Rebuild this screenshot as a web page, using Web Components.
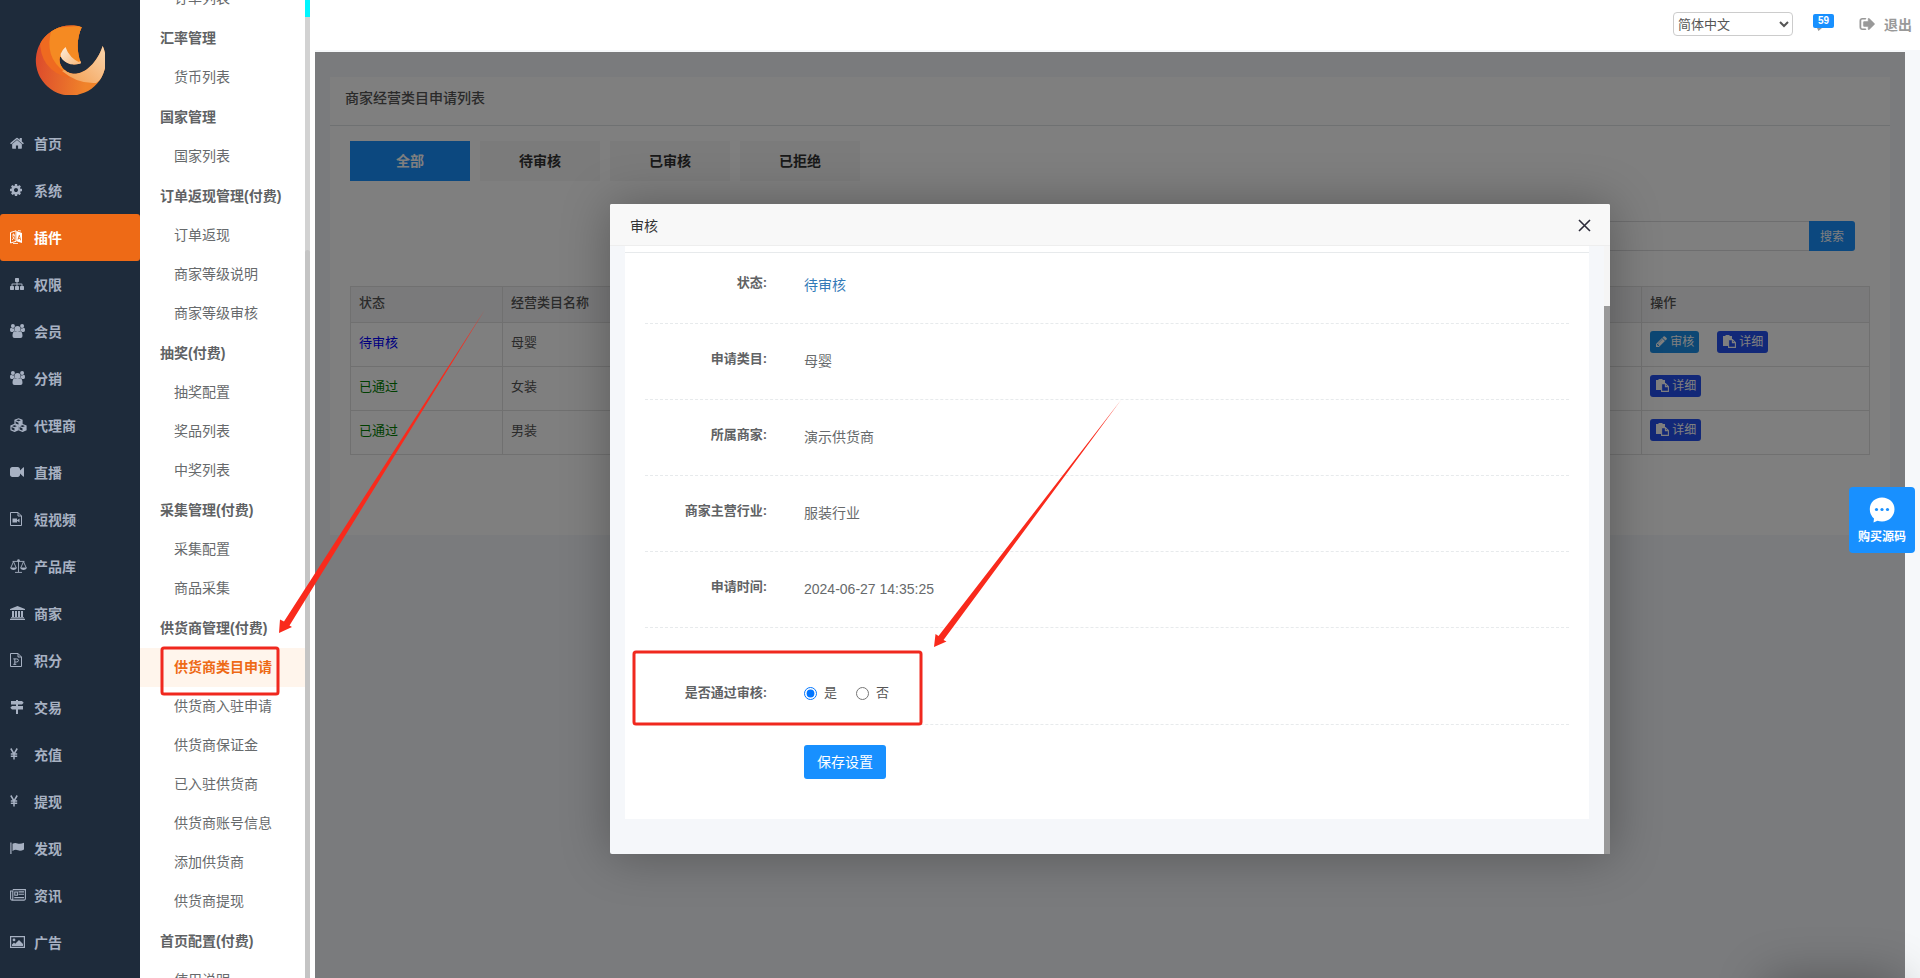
<!DOCTYPE html>
<html lang="zh-CN">
<head>
<meta charset="utf-8">
<title>商家经营类目申请列表</title>
<style>
  html, body { margin: 0; height: 100%; }
  body { overflow: hidden; font-family: "Liberation Sans", "Noto Sans CJK SC", sans-serif; font-size: 14px; color: #555; background: #fff; }
</style>
</head>
<body>
<admin-shell>
  <main-nav slot="nav"></main-nav>
  <sub-nav slot="sub"></sub-nav>
  <top-bar slot="top"></top-bar>
  <category-page></category-page>
  <audit-dialog slot="dialog" heading="审核"></audit-dialog>
  <source-button slot="float"></source-button>
  <mark-layer slot="marks"></mark-layer>
</admin-shell>

<script>
const ICONS = {
  home: ['64 160 1664 1408', 14, 12, '<path d="M1472 992v480q0 26-19 45t-45 19h-384v-384h-256v384h-384q-26 0-45-19t-19-45v-480q0-1 .5-3t.5-3l575-474 575 474q1 2 1 6zm223-69l-62 74q-8 9-21 11h-3q-13 0-21-7l-692-577-692 577q-12 8-24 7-13-2-21-11l-62-74q-8-10-7-23.5t11-21.5l719-599q32-26 76-26t76 26l244 204v-195q0-14 9-23t23-9h192q14 0 23 9t9 23v408l219 182q10 8 11 21.5t-7 23.5z"/>'],
  cog: ['128 128 1536 1536', 12, 12, '<path d="M1152 896q0-106-75-181t-181-75-181 75-75 181 75 181 181 75 181-75 75-181zm512-109v222q0 12-8 23t-20 13l-185 28q-19 54-39 91 35 50 107 138 10 12 10 25t-9 23q-27 37-99 108t-94 71q-12 0-26-9l-138-108q-44 23-91 38-16 136-29 186-7 28-36 28h-222q-14 0-24.5-8.5t-11.5-21.5l-28-184q-49-16-90-37l-141 107q-10 9-25 9-14 0-25-11-126-114-165-168-7-10-7-23 0-12 8-23 15-21 51-66.5t54-70.5q-27-50-41-99l-183-27q-13-2-21-12.5t-8-23.5v-222q0-12 8-23t19-13l186-28q14-46 39-92-40-57-107-138-10-12-10-24 0-10 9-23 26-36 98.5-107.5t94.5-71.5q13 0 26 10l138 107q44-23 91-38 16-136 29-186 7-28 36-28h222q14 0 24.5 8.5t11.5 21.5l28 184q49 16 90 37l142-107q9-9 24-9 13 0 25 10 129 119 165 170 7 8 7 22 0 12-8 23-15 21-51 66.5t-54 70.5q26 50 41 98l183 28q13 2 21 12.5t8 23.5z"/>'],
  language: ['0 0 12 14', 12, 14, '<path d="M.5 2.500 6 .8v10.500L.5 13z" fill="none" stroke="currentColor"/><path d="M2 5h3M3.500 3.500v2M2 10c1.500-1 2.300-3 2.300-5M2.500 6.500 4.800 9.500" fill="none" stroke="currentColor" stroke-width=".8"/><path fill-rule="evenodd" d="M6.500 1 12 3v10l-5.500-1.700zM9 4.800 7.500 9.500l.8.200.3-1 1.400.4.300 1.100.8.200L9.700 5zM9.300 6.200l.5 2-1-.3z"/><path d="M3 13.500h5M8 .5l3 .500" fill="none" stroke="currentColor" stroke-width=".8"/>'],
  sitemap: ['0 128 1792 1536', 14, 12, '<path d="M1792 1248v320q0 40-28 68t-68 28h-320q-40 0-68-28t-28-68v-320q0-40 28-68t68-28h96v-192h-512v192h96q40 0 68 28t28 68v320q0 40-28 68t-68 28h-320q-40 0-68-28t-28-68v-320q0-40 28-68t68-28h96v-192h-512v192h96q40 0 68 28t28 68v320q0 40-28 68t-68 28h-320q-40 0-68-28t-28-68v-320q0-40 28-68t68-28h96v-192q0-52 38-90t90-38h512v-192h-96q-40 0-68-28t-28-68v-320q0-40 28-68t68-28h320q40 0 68 28t28 68v320q0 40-28 68t-68 28h-96v192h512q52 0 90 38t38 90v192h96q40 0 68 28t28 68z"/>'],
  group: ['0 0 15 14', 15, 14, '<circle cx="7.500" cy="5" r="3"/><circle cx="2.900" cy="2" r="2"/><circle cx="12.100" cy="2" r="2"/><path d="M0 6.200C0 4.600.5 3.800 1.200 3.800q1.600 1 3 .4Q3.700 6 5 7.100 3.500 7 2.800 8H1.400Q0 8 0 6.200zM15 6.200c0-1.600-.5-2.400-1.200-2.400q-1.600 1-3 .4Q11.300 6 10 7.100q1.500-.1 2.200.9h1.400Q15 8 15 6.200zM2.500 12c0-3 .8-4.800 2.500-4.800q2.500 1.700 5 0c1.700 0 2.500 1.800 2.500 4.800q0 2-2 2h-6q-2 0-2-2z"/>'],
  cubes: ['0 0 17 14', 17, 14, '<g fill="none" stroke="currentColor" stroke-width="1.200"><path d="M8.500.8 12 2.200v3.600L8.500 7.400 5 5.800V2.200z"/><path d="M5 2.400 8.500 4 12 2.400M4.500 6.500 8 8v3.800l-3.500 1.600L1 11.800V8z"/><path d="m1 8.200 3.500 1.500L8 8.200M12.500 6.500 16 8v3.800l-3.500 1.600L9 11.800V8z"/><path d="m9 8.200 3.500 1.500L16 8.200"/></g><path d="M8.500 4 12 2.400v3.400L8.500 7.400zM4.500 9.700 8 8.200v3.600l-3.500 1.600zM12.500 9.700 16 8.200v3.600l-3.500 1.600z"/>'],
  video: ['0 288 1792 1216', 14, 10, '<path d="M1792 352v1088q0 42-39 59-13 5-25 5-27 0-45-19l-403-403v166q0 119-84.5 203.5t-203.5 84.5h-704q-119 0-203.500-84.5t-84.5-203.5v-704q0-119 84.5-203.5t203.5-84.5h704q119 0 203.500 84.500t84.500 203.500v165l403-402q18-19 45-19 12 0 25 5 39 17 39 59z"/>'],
  filevideo: ['0 0 12 14', 12, 14, '<path d="M.5.5H8L11.500 4v9.500H.5zM8 .5V4h3.500" fill="none" stroke="currentColor"/><path d="M2.500 6.500H7v4H2.500zM7 8.300l2.500-1.800v4L7 8.800z"/>'],
  scale: ['0 0 17 14', 17, 14, '<g fill="none" stroke="currentColor" stroke-width=".9"><path d="M8.500 1v12M5 13.400h7M2.500 2.400h12M3.500 2.600.7 9M3.500 2.600 6.300 9M13.500 2.600 10.700 9M13.500 2.600 16.300 9M.5 9h6M10.500 9h6"/></g><circle cx="8.500" cy="1.500" r="1.300"/><path d="M.4 9h6.200q-.6 2-3.100 2T.4 9zM10.400 9h6.200q-.6 2-3.100 2t-3.100-2z"/>'],
  bank: ['0 0 15 14', 15, 14, '<path d="M7.500 0 15 3v1H0V3zM2 5h2v6H2zM5 5h2v6H5zM8 5h2v6H8zM11 5h2v6h-2zM1 11.300h13v1H1zM0 12.800h15V14H0z"/>'],
  fileppt: ['0 0 12 14', 12, 14, '<path d="M.5.5H8L11.500 4v9.500H.5zM8 .5V4h3.500M3.300 5.900h3.200q2 0 2 1.500t-2 1.600H4.800M4.800 5.900v5.600M3.300 11.300h3" fill="none" stroke="currentColor"/>'],
  signs: ['0 0 14 14', 14, 14, '<path d="M6 0h2v1h4l1.700 1.800L12 4.500H1V1h5zM6 4.500h2V6h5v3.500H2L.3 7.800 2 6h4zM6 9.500h2V14H6z"/>'],
  yen: ['0 0 8 12', 8, 12, '<path d="M.8.500 4 6l3.200-5.500M4 6v5.500M.8 6h6.400M.8 8.300h6.400" fill="none" stroke="currentColor" stroke-width="1.500"/>'],
  flag: ['0 0 14 12', 14, 12, '<path d="M.3.500h1.200V12H.3zM2.500 1.800q2.500-1.500 5-.4t6.500-.6v6.700q-3.500 2-6 .8t-5.500.6z"/>'],
  news: ['0 0 16 12', 16, 12, '<path d="M2.800.6h12.600v9q0 1.500-1.200 1.500H2Q.6 11 .6 9.500V2h2.200v7.500Q2.800 11 2 11.100M8.500 2.900H14M8.500 5.200H14M4.300 8.600H14M4.800 3h2.600v3.200H4.800z" fill="none" stroke="currentColor" stroke-width="1.100"/>'],
  picture: ['0 0 15 12', 15, 12, '<path d="M.6.6h13.800v10.800H.6z" fill="none" stroke="currentColor" stroke-width="1.200"/><circle cx="4" cy="3.900" r="1.400"/><path d="M2 10V8.500l2-2 1.200 1.200L9 3.900l4 4V10z"/>'],
  pencil: ['128 128 1536 1536', 11, 11, '<path d="M491 1536l91-91-235-235-91 91v107h128v128h107zm523-928q0-22-22-22-10 0-17 7l-542 542q-7 7-7 17 0 22 22 22 10 0 17-7l542-542q7-7 7-17zm-54-192l416 416-832 832h-416v-416zm683 96q0 53-37 90l-166 166-416-416 166-165q36-38 90-38 53 0 91 38l235 234q37 39 37 91z"/>'],
  paste: ['0 0 13 13', 13, 13, '<path d="M0 1h2.500V0h4v1H9v3H5v7H0z"/><path d="M5.600 4.600h3.800l3 3v4.800H5.600zM9.400 4.600v3h3" fill="none" stroke="currentColor" stroke-width="1.100"/>'],
  signout: ['0 256 1664 1280', 16, 12, '<path stroke="currentColor" stroke-width="60" d="M704 1440q0 4 1 20t.5 26.500-3 23.500-10 19.500-20.500 6.500h-320q-119 0-203.500-84.500t-84.500-203.500v-704q0-119 84.500-203.500t203.500-84.500h320q13 0 22.500 9.500t9.500 22.500q0 4 1 20t.5 26.500-3 23.500-10 19.500-20.500 6.500h-320q-66 0-113 47t-47 113v704q0 66 47 113t113 47h312l11.500 1 11.500 3 8 5.500 7 9 2 13.500zm928-544q0 26-19 45l-544 544q-19 19-45 19t-45-19-19-45v-288h-448q-26 0-45-19t-19-45v-384q0-26 19-45t45-19h448v-288q0-26 19-45t45-19 45 19l544 544q19 19 19 45z"/>'],
  chat: ['0 0 26 26', 26, 26, '<path d="M13 .5C20 .5 25.500 5.500 25.500 12.300S20 24.500 13 24.500q-2.500 0-4.500-.7L4.500 25.500 5 21.500Q.8 18 .8 12.300C.8 5.500 6 .5 13 .5z"/><g fill="#1890ff"><circle cx="7.500" cy="12.500" r="1.600"/><circle cx="13" cy="12.500" r="1.600"/><circle cx="18.500" cy="12.500" r="1.600"/></g>']
};

function define(name, html, setup) {
  const tpl = document.createElement('template');
  tpl.innerHTML = html;
  customElements.define(name, class extends HTMLElement {
    connectedCallback() {
      if (this.shadowRoot) return;
      this.attachShadow({ mode: 'open' }).append(tpl.content.cloneNode(true));
      if (setup) setup(this, this.shadowRoot);
    }
  });
}

define('ui-icon', `<style>:host{display:inline-flex;flex:none}svg{display:block;fill:currentColor}</style>`, (el, root) => {
  const [box, w, h, body] = ICONS[el.getAttribute('name')];
  root.innerHTML += `<svg aria-hidden="true" width="${w}" height="${h}" viewBox="${box}">${body}</svg>`;
});

define('admin-shell', `
<style>
  :host{display:grid;grid-template-columns:140px 175px minmax(0,1fr);height:100vh;overflow:hidden;position:relative}
  main{display:flex;flex-direction:column;min-width:0;background:#f6f8fa}
  .frame{position:relative;flex:1;min-height:0;margin:2px 15px 0 0;overflow:hidden;background:#f5f7fa}
  .mask{position:absolute;inset:0;background:rgba(0,0,0,.5);display:flex;justify-content:center;align-items:flex-start;padding-top:152px}
  .next{position:absolute;top:100%;right:20px;width:135px;height:100px;box-shadow:1px 1px 50px rgba(0,0,0,.3)}
</style>
<slot name="nav"></slot>
<slot name="sub"></slot>
<main>
  <slot name="top"></slot>
  <div class="frame"><slot></slot><div class="mask"><slot name="dialog"></slot></div></div>
</main>
<div class="next"></div>
<slot name="float"></slot>
<slot name="marks"></slot>`);

define('nav-item', `
<style>
  :host{display:block}
  a{display:flex;align-items:center;height:47px;padding:0 0 2px 10px;color:#a7b1c2;font-weight:700;text-decoration:none;border-radius:3px;box-sizing:border-box}
  :host([active]) a{background:#ee6a16;color:#fff}
  span{width:24px;display:flex;flex:none}
</style>
<a href="#"><span></span><slot></slot></a>`, (el, root) => {
  root.querySelector('span').innerHTML = `<ui-icon name="${el.getAttribute('icon')}"></ui-icon>`;
});

define('main-nav', `
<style>
  :host{display:block;background:#1e2b3b;overflow:hidden}
  svg{display:block;margin:25px auto}
</style>
<svg width="70" height="70" viewBox="0 0 70 70" role="img" aria-label="logo">
  <defs>
    <linearGradient id="a" x1="0" y1=".5" x2="1" y2=".6"><stop offset="0" stop-color="#dc4a2c"/><stop offset=".75" stop-color="#f0832a"/></linearGradient>
    <linearGradient id="b" x1="0" y1="1" x2="1" y2="0"><stop offset="0" stop-color="#f39a4a"/><stop offset="1" stop-color="#fbdcb8"/></linearGradient>
    <linearGradient id="c" x1="0" y1="0" x2="1" y2="1"><stop offset="0" stop-color="#fdeedd"/><stop offset="1" stop-color="#f7b778"/></linearGradient>
    <clipPath id="k"><path d="M46.700 2.200A35 35 0 1 0 67.700 21C62 38 50 49.500 38 48.800 28 47.500 24 39 24.500 34Q25 30 27 33 34 42 46 38C41 26 42 12 46.700 2.200z"/></clipPath>
  </defs>
  <g clip-path="url(#k)">
    <rect width="70" height="70" fill="url(#a)"/>
    <path d="M5 14Q4 45 34 53L60 0H10z" fill="#ef6a20"/>
    <path d="M17 3Q8 32 30 47L60 30V0z" fill="#f58a22"/>
    <path d="M27 46Q42 59 61 58L72 50V15L40 40z" fill="url(#b)"/>
  </g>
  <path d="M30.500 22Q34 33 46 38.300 34 42 27 34 23 29 30.500 22z" fill="url(#c)"/>
</svg>
<nav>
  <nav-item icon="home">首页</nav-item><nav-item icon="cog">系统</nav-item><nav-item icon="language" active>插件</nav-item>
  <nav-item icon="sitemap">权限</nav-item><nav-item icon="group">会员</nav-item><nav-item icon="group">分销</nav-item>
  <nav-item icon="cubes">代理商</nav-item><nav-item icon="video">直播</nav-item><nav-item icon="filevideo">短视频</nav-item>
  <nav-item icon="scale">产品库</nav-item><nav-item icon="bank">商家</nav-item><nav-item icon="fileppt">积分</nav-item>
  <nav-item icon="signs">交易</nav-item><nav-item icon="yen">充值</nav-item><nav-item icon="yen">提现</nav-item>
  <nav-item icon="flag">发现</nav-item><nav-item icon="news">资讯</nav-item><nav-item icon="picture">广告</nav-item>
</nav>`);

define('sub-nav', `
<style>
  :host{display:grid;grid-template-columns:minmax(0,1fr) 5px;padding-right:5px;background:#fff;overflow:hidden;min-height:0}
  nav{margin-top:-21px;min-height:0}
  h2{margin:0;height:40px;line-height:40px;padding-left:20px;font-size:14px;color:#606264}
  a{display:block;height:39px;line-height:39px;padding-left:34px;color:#676a6c;text-decoration:none}
  a.on{background:#fff5ec;color:#ee6a16;font-weight:700}
  .bar{display:grid;grid-template-rows:17px 233px 1fr;background:#d2d2d2}
  .bar i:first-child{background:#00f6ff}
  .bar i:last-child{background:#c4c4c4;border-radius:3px 3px 0 0}
</style>
<nav>
  <a href="#">订单列表</a>
  <h2>汇率管理</h2><a href="#">货币列表</a>
  <h2>国家管理</h2><a href="#">国家列表</a>
  <h2>订单返现管理(付费)</h2><a href="#">订单返现</a><a href="#">商家等级说明</a><a href="#">商家等级审核</a>
  <h2>抽奖(付费)</h2><a href="#">抽奖配置</a><a href="#">奖品列表</a><a href="#">中奖列表</a>
  <h2>采集管理(付费)</h2><a href="#">采集配置</a><a href="#">商品采集</a>
  <h2>供货商管理(付费)</h2><a href="#" class="on">供货商类目申请</a><a href="#">供货商入驻申请</a><a href="#">供货商保证金</a><a href="#">已入驻供货商</a><a href="#">供货商账号信息</a><a href="#">添加供货商</a><a href="#">供货商提现</a>
  <h2>首页配置(付费)</h2><a href="#">使用说明</a>
</nav>
<div class="bar"><i></i><i></i><i></i></div>`);

define('top-bar', `
<style>
  :host{display:flex;justify-content:flex-end;align-items:center;height:50px;padding:0 8px 2px 0;box-sizing:border-box;background:#fff;flex:none}
  select{width:120px;height:24px;box-sizing:border-box;border:1px solid #ccc;border-radius:4px;background:#fff;color:#555;font:13px "Liberation Sans","Noto Sans CJK SC",sans-serif;padding:0}
  .msg{position:relative;width:21px;height:24px;margin:0 25px 0 20px}
  .msg svg{display:block;position:absolute;left:2px;top:7px}
  .msg b{position:absolute;left:0;top:2px;width:21px;height:14px;border-radius:2px;background:#1890ff;color:#fff;font-size:10px;line-height:14px;text-align:center}
  .out{display:flex;align-items:center;gap:9px;color:#999;font-weight:700;text-decoration:none}
</style>
<select aria-label="语言"><option>简体中文</option></select>
<a class="msg" href="#"><svg width="14" height="12" viewBox="0 0 14 12" fill="#999"><path d="M0 2h14v7H7l-3.500 3L2 9H0z"/></svg><b>59</b></a>
<a class="out" href="#"><ui-icon name="signout"></ui-icon>退出</a>`);

define('category-page', `
<style>
  :host{display:block;padding:25px 15px}
  section{background:#fff;padding-bottom:80px}
  h1{margin:0;height:48px;line-height:42px;padding-left:15px;border-bottom:1px solid #dfe2e4;font-size:14px;font-weight:500;color:#555}
  .body{padding:15px 20px 0}
  .tabs{display:flex;gap:10px}
  .tabs button{width:120px;height:40px;border:0;padding:0 0 2px;background:#f6f6f6;color:#333;font:700 14px "Liberation Sans","Noto Sans CJK SC",sans-serif}
  .tabs button.on{background:#1890ff;color:#fff}
  form{display:flex;justify-content:flex-end;margin:40px 15px 35px}
  input{width:300px;height:30px;box-sizing:border-box;border:1px solid #dcdddf;border-right:0;background:#fff}
  form button{width:46px;height:30px;border:0;border-radius:0 3px 3px 0;background:#1890ff;color:#fff;font:12px "Liberation Sans","Noto Sans CJK SC",sans-serif;padding:0 0 2px}
  table{width:100%;border-collapse:collapse;table-layout:fixed;font-size:13px}
  th,td{border:1px solid #e0e0e0;text-align:left;padding:0 8px;box-sizing:border-box}
  th{height:36px;background:#f5f5f6;font-weight:500}
  th div{line-height:32px;height:35px}
  td{height:44px;padding-bottom:6px}
  .wait{color:#00f}.pass{color:green}
  .ops{display:flex;gap:18px}
  .ops a{display:flex;align-items:center;gap:3px;height:22px;padding:0 5px 0 6px;border-radius:3px;background:#2450f0;color:#fff;font-size:12px;line-height:22px;text-decoration:none;box-sizing:border-box}
  .ops a.edit{background:#1a8fe8}
</style>
<section>
  <h1>商家经营类目申请列表</h1>
  <div class="body">
    <div class="tabs"><button class="on">全部</button><button>待审核</button><button>已审核</button><button>已拒绝</button></div>
    <form><input type="text" aria-label="关键词"><button type="button">搜索</button></form>
    <table>
      <colgroup><col style="width:10%"><col style="width:75%"><col style="width:15%"></colgroup>
      <thead><tr><th><div>状态</div></th><th><div>经营类目名称</div></th><th><div>操作</div></th></tr></thead>
      <tbody>
        <tr><td class="wait">待审核</td><td>母婴</td><td><div class="ops"><a class="edit" href="#"><ui-icon name="pencil"></ui-icon>审核</a><a href="#"><ui-icon name="paste"></ui-icon>详细</a></div></td></tr>
        <tr><td class="pass">已通过</td><td>女装</td><td><div class="ops"><a href="#"><ui-icon name="paste"></ui-icon>详细</a></div></td></tr>
        <tr><td class="pass">已通过</td><td>男装</td><td><div class="ops"><a href="#"><ui-icon name="paste"></ui-icon>详细</a></div></td></tr>
      </tbody>
    </table>
  </div>
</section>`);

define('audit-dialog', `
<style>
  :host{display:block;width:1000px;max-width:94%;background:#f5f7fa;border-radius:2px;box-shadow:1px 1px 50px rgba(0,0,0,.3)}
  header{display:flex;align-items:center;justify-content:space-between;height:42px;box-sizing:border-box;padding:0 19px 0 20px;border-bottom:1px solid #eee;background:#f8f8f8;color:#333;border-radius:2px 2px 0 0}
  header button{border:0;background:none;padding:2px 0 0;color:#2d2c3b;display:flex}
  .scroll{display:grid;grid-template-columns:minmax(0,1fr) 6px}
  .pad{padding:0 15px 35px}
  .track{display:grid;grid-template-rows:60px 1fr;background:#f5f5f5}
  .track i:last-child{background:#999}
  .panel{background:#fff;padding-bottom:40px}
  .edge{height:6px;border-bottom:1px solid #e7eaec}
  dl,form{margin:0 20px}
  .row{display:grid;grid-template-columns:122px minmax(0,1fr);column-gap:37px;padding:25px 0 28px;border-bottom:1px dashed #e7eaec;line-height:20px}
  dl .row:first-child{padding-top:20px}
  dt,.name{font-size:13px;font-weight:700;text-align:right;color:#606264}
  dd{margin:0;padding-top:2px;color:#676a6c}
  dd.state{color:#337ab7}
  .row.pick{padding:55px 0 21px}
  .opts{display:flex;gap:19px;font-size:13px}
  label{display:flex;align-items:center;gap:7px}
  input{margin:0;width:13px;height:13px}
  .save{display:block;margin:20px 0 0 159px;width:82px;height:34px;border:0;border-radius:3px;padding:0 0 2px;background:#1890ff;color:#fff;font:14px "Liberation Sans","Noto Sans CJK SC",sans-serif}
</style>
<header><span></span><button aria-label="关闭"><svg width="13" height="13" viewBox="0 0 13 13" fill="none" stroke="currentColor" stroke-width="1.600"><path d="M1 1l11 11M12 1 1 12"/></svg></button></header>
<div class="scroll">
  <div class="pad"><div class="panel">
    <div class="edge"></div>
    <dl>
      <div class="row"><dt>状态:</dt><dd class="state">待审核</dd></div>
      <div class="row"><dt>申请类目:</dt><dd>母婴</dd></div>
      <div class="row"><dt>所属商家:</dt><dd>演示供货商</dd></div>
      <div class="row"><dt>商家主营行业:</dt><dd>服装行业</dd></div>
      <div class="row"><dt>申请时间:</dt><dd>2024-06-27 14:35:25</dd></div>
    </dl>
    <form>
      <div class="row pick" role="radiogroup" aria-labelledby="q"><span class="name" id="q">是否通过审核:</span>
        <div class="opts"><label><input type="radio" name="pass" checked>是</label><label><input type="radio" name="pass">否</label></div></div>
      <button class="save" type="button">保存设置</button>
    </form>
  </div></div>
  <div class="track"><i></i><i></i></div>
</div>`, (el, root) => { root.querySelector('header span').textContent = el.getAttribute('heading'); });

define('source-button', `
<style>
  :host{display:block;position:absolute;right:5px;top:487px}
  a{display:flex;flex-direction:column;align-items:center;gap:4px;width:66px;height:66px;box-sizing:border-box;padding-top:10px;border-radius:4px;background:#1890ff;color:#fff;font-size:12px;font-weight:700;line-height:20px;text-decoration:none}
</style>
<a href="#"><ui-icon name="chat"></ui-icon>购买源码</a>`);

/* Hand-drawn call-outs that lie over the whole screen. */
define('mark-layer', `
<style>:host{display:block;position:absolute;inset:0;pointer-events:none}svg{display:block;width:100%;height:100%}</style>
<svg fill="none">
  <g stroke="#f0281e" stroke-width="3"><rect x="162" y="648" width="116" height="46" rx="2"/><rect x="634" y="652" width="287" height="72" rx="2"/></g>
  <g fill="#f92a1c">
    <path d="M485 309.500 289.500 625.500 292 627 279 633 280 619.500 284 621.500z"/>
    <path d="M1121 400 943.500 640 946.500 641.500 934 647 935.500 634 938.500 636z"/>
  </g>
</svg>`);
</script>
</body>
</html>
